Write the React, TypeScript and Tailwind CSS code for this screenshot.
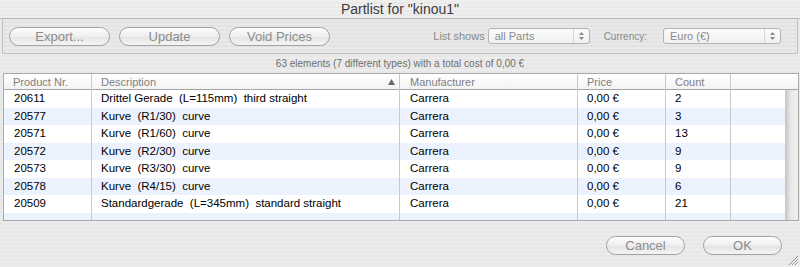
import React from 'react';

type Part = {
  nr: string;
  description: string;
  manufacturer: string;
  price: string;
  count: number;
};

const parts: Part[] = [
  { nr: '20611', description: 'Drittel Gerade  (L=115mm)  third straight', manufacturer: 'Carrera', price: '0,00 €', count: 2 },
  { nr: '20577', description: 'Kurve  (R1/30)  curve', manufacturer: 'Carrera', price: '0,00 €', count: 3 },
  { nr: '20571', description: 'Kurve  (R1/60)  curve', manufacturer: 'Carrera', price: '0,00 €', count: 13 },
  { nr: '20572', description: 'Kurve  (R2/30)  curve', manufacturer: 'Carrera', price: '0,00 €', count: 9 },
  { nr: '20573', description: 'Kurve  (R3/30)  curve', manufacturer: 'Carrera', price: '0,00 €', count: 9 },
  { nr: '20578', description: 'Kurve  (R4/15)  curve', manufacturer: 'Carrera', price: '0,00 €', count: 6 },
  { nr: '20509', description: 'Standardgerade  (L=345mm)  standard straight', manufacturer: 'Carrera', price: '0,00 €', count: 21 },
];

const cols = 'grid grid-cols-[88px_308px_178px_88px_65px_55px]';

const AquaButton: React.FC<{ label: string; width: string }> = ({ label, width }) => (
  <button
    className={`${width} h-[19px] rounded-full border border-[#a2a2a2] bg-[linear-gradient(#fdfdfd,#eeeeee_50%,#e4e4e4_51%,#f4f4f4)] text-[13px] leading-none text-[#8c8c8c] shadow-[inset_0_1px_0_#ffffff]`}
  >
    {label}
  </button>
);

const PopUp: React.FC<{ value: string; width: string }> = ({ value, width }) => (
  <div
    className={`${width} h-[16px] flex items-center rounded-[3px] border border-[#b3b3b3] bg-[linear-gradient(#fbfbfb,#f1f1f1)] text-[11px] text-[#8a8a8a]`}
  >
    <span className="flex-1 pl-[6px] leading-none">{value}</span>
    <span className="w-[16px] h-full flex flex-col items-center justify-center gap-[2px] border-l border-[#d6d6d6]">
      <svg width="5" height="3" viewBox="0 0 5 3"><path d="M0 3 L2.5 0 L5 3 Z" fill="#8a8a8a" /></svg>
      <svg width="5" height="3" viewBox="0 0 5 3"><path d="M0 0 L2.5 3 L5 0 Z" fill="#8a8a8a" /></svg>
    </span>
  </div>
);

const App: React.FC = () => {
  return (
    <div className="w-[800px] h-[267px] overflow-hidden flex flex-col font-['Liberation_Sans',Arial,sans-serif] bg-[repeating-linear-gradient(0deg,#ececec_0px,#ececec_2px,#e7e7e7_2px,#e7e7e7_4px)]">
      {/* title bar */}
      <div className="h-[19px] shrink-0 flex items-center justify-center border-b border-[#b8b8b8] bg-[repeating-linear-gradient(0deg,#efefef_0px,#efefef_2px,#eaeaea_2px,#eaeaea_4px)] text-[14px] text-[#3c3c3c]">
        Partlist for "kinou1"
      </div>

      {/* toolbar box */}
      <div className="h-[35px] shrink-0 mx-[2px] flex items-center border-x border-b border-[#c0c0c0] bg-[repeating-linear-gradient(0deg,#e9e9e9_0px,#e9e9e9_2px,#e3e3e3_2px,#e3e3e3_4px)] pl-[6px] pr-[16px]">
        <div className="flex gap-[9px]">
          <AquaButton label="Export..." width="w-[101px]" />
          <AquaButton label="Update" width="w-[101px]" />
          <AquaButton label="Void Prices" width="w-[101px]" />
        </div>
        <div className="ml-auto flex items-center">
          <span className="text-[11px] text-[#8a8a8a] mr-[3px]">List shows</span>
          <PopUp value="all Parts" width="w-[102px]" />
          <span className="text-[10px] text-[#8a8a8a] ml-[14px] mr-[16px]">Currency:</span>
          <PopUp value="Euro (€)" width="w-[118px]" />
        </div>
      </div>

      {/* status */}
      <div className="h-[19px] shrink-0 flex items-center justify-center text-[10px] text-[#6e6e6e]">
        63 elements (7 different types) with a total cost of 0,00 €
      </div>

      {/* table */}
      <div className="ml-[3px] w-[796px] h-[148px] shrink-0 border border-[#a9a9a9] bg-white flex flex-col overflow-hidden">
        <div className={`${cols} grid-cols-[88px_308px_178px_88px_65px_1fr] h-[16px] shrink-0 border-b border-[#a5a5a5] bg-[linear-gradient(#ffffff,#f3f3f3)] text-[11px] text-[#808080]`}>
          <div className="border-r border-[#c9c9c9] pl-[9px] flex items-center">Product Nr.</div>
          <div className="border-r border-[#c9c9c9] pl-[9px] pr-[4px] flex items-center justify-between">
            <span>Description</span>
            <svg width="7" height="6" viewBox="0 0 7 6"><path d="M0 6 L3.5 0 L7 6 Z" fill="#6a6a6a" /></svg>
          </div>
          <div className="border-r border-[#c9c9c9] pl-[10px] flex items-center">Manufacturer</div>
          <div className="border-r border-[#c9c9c9] pl-[9px] flex items-center">Price</div>
          <div className="border-r border-[#c9c9c9] pl-[9px] flex items-center">Count</div>
          <div />
        </div>
        <div className="flex-1 flex min-h-0">
          <div className="w-[782px] flex flex-col">
            {parts.map((p, i) => (
              <div
                key={p.nr}
                className={`${cols} h-[17.5px] shrink-0 text-[11.5px] text-black ${i % 2 === 1 ? 'bg-[#edf3fe]' : 'bg-white'}`}
              >
                <div className="border-r border-[#c9c9c9] pl-[10px] flex items-center">{p.nr}</div>
                <div className="border-r border-[#c9c9c9] pl-[9px] flex items-center whitespace-pre">{p.description}</div>
                <div className="border-r border-[#c9c9c9] pl-[10px] flex items-center">{p.manufacturer}</div>
                <div className="border-r border-[#c9c9c9] pl-[9px] flex items-center">{p.price}</div>
                <div className="border-r border-[#c9c9c9] pl-[9px] flex items-center">{p.count}</div>
                <div className="border-r border-[#c9c9c9]" />
              </div>
            ))}
            <div className={`${cols} flex-1 bg-[#edf3fe]`}>
              <div className="border-r border-[#c9c9c9]" />
              <div className="border-r border-[#c9c9c9]" />
              <div className="border-r border-[#c9c9c9]" />
              <div className="border-r border-[#c9c9c9]" />
              <div className="border-r border-[#c9c9c9]" />
              <div className="border-r border-[#c9c9c9]" />
            </div>
          </div>
          <div className="flex-1 bg-[linear-gradient(90deg,#c8c8c8,#e6e6e6_35%,#f0f0f0)]" />
        </div>
      </div>

      {/* bottom buttons */}
      <div className="flex-1 flex items-start justify-end pt-[15px] pr-[18px] gap-[18px] relative">
        <AquaButton label="Cancel" width="w-[79px]" />
        <AquaButton label="OK" width="w-[79px]" />
        <svg className="absolute right-[1px] bottom-[1px]" width="12" height="12" viewBox="0 0 12 12">
          <path d="M11 2 L2 11 M11 5 L5 11 M11 8 L8 11" stroke="#8a8a8a" strokeWidth="1" />
          <path d="M11.8 2.8 L2.8 11.8 M11.8 5.8 L5.8 11.8 M11.8 8.8 L8.8 11.8" stroke="#ffffff" strokeWidth="0.8" />
        </svg>
      </div>
    </div>
  );
};

export default App;
